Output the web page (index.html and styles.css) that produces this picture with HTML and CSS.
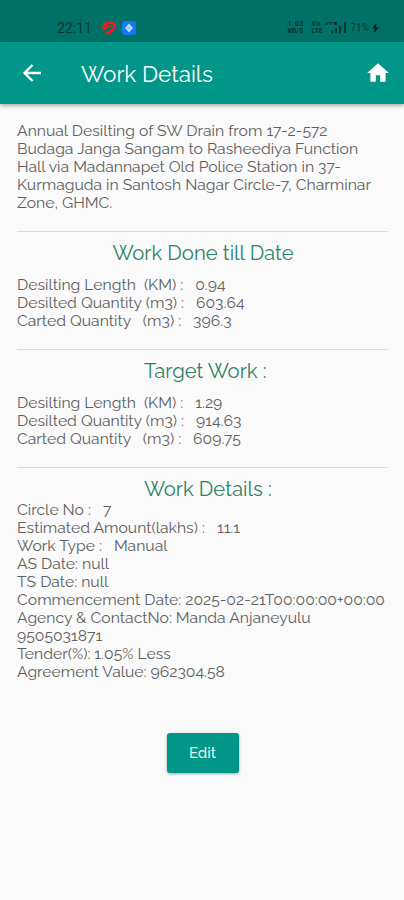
FILE: index.html
```
<!doctype html>
<html lang="en">
<head>
	<meta charset="utf-8">
	<meta name="viewport" content="width=device-width, initial-scale=1.0" />
	<title>Work Details</title>
	<link rel="stylesheet" href="styles.css">
</head>
<body>

	<div class="statusbar">
		<span class="clock">22:11</span>
		<svg class="carrier" width="14" height="14" viewBox="0 0 14 14"><path d="M3 8.500C.5 7 1.500 2 8 1.600c5-.2 6 3.400 3.500 6.200C9.500 10 8 10.500 7 12.500" fill="none" stroke="#ee1c25" stroke-width="2.600"/><path d="M2.500 8.500C4 5 8.500 4 9 6" fill="none" stroke="#ee1c25" stroke-width="2"/><path d="M3 13.500c0-2 2-3 4-4l1 2-1.500 2z" fill="#ee1c25"/></svg>
		<svg class="app" width="14" height="14" viewBox="0 0 14 14"><rect width="14" height="14" rx="3" fill="#1478f0"/><path d="M7 2.500L11 7l-4 4.500L3 7z" fill="#b9dcff"/><path d="M7 5.500L8.500 7 7 8.500 5.500 7z" fill="#8cc2fb"/></svg>
		<div class="system">
			<span class="stack speed"><b>1.03</b><b>KB/S</b></span>
			<span class="stack volte"><b>Vo</b><b>LTE</b></span>
			<svg class="signal" width="22" height="13" viewBox="0 0 22 13"><path d="M0 1h1v3H0zM2 1h2v1H3v2H2zM5 1h3v1H6v2H5zM9 1h3v3H9zM6 9h2v3H6zM10 7h2v5h-2zM14 5h2v7h-2zM19 1h2v11h-2z" fill="#053630"/></svg>
			<span class="battery">71%</span>
			<svg class="bolt" width="7" height="10" viewBox="0 0 7 10"><path d="M4.500 0L0 5.500h2.500L2 10l5-5.700H4.200z" fill="#02211d"/></svg>
		</div>
	</div>

	<div class="appbar">
		<svg class="back" width="24" height="24" viewBox="0 0 24 24"><path d="M21 12H4.500M12.500 4l-8 8 8 8" fill="none" stroke="#fff" stroke-width="2.300"/></svg>
		<h1>Work Details</h1>
		<svg class="home" width="26" height="26" viewBox="0 0 24 24"><path d="M10 20v-6h4v6h5v-8h3L12 3 2 12h3v8z" fill="#fff"/></svg>
	</div>

	<div class="content">
		<p class="summary">Annual Desilting of SW Drain from 17-2-572<br>Budaga Janga Sangam to Rasheediya Function<br>Hall via Madannapet Old Police Station in 37-<br>Kurmaguda in Santosh Nagar Circle-7, Charminar<br>Zone, GHMC.</p>

		<div class="section">
			<h2>Work Done till Date</h2>
			<ul>
				<li>Desilting Length  (KM) :   0.94</li>
				<li>Desilted Quantity (m3) :   603.64</li>
				<li>Carted Quantity   (m3) :   396.3</li>
			</ul>
		</div>

		<div class="section">
			<h2> Target Work :</h2>
			<ul>
				<li>Desilting Length  (KM) :   1.29</li>
				<li>Desilted Quantity (m3) :   914.63</li>
				<li>Carted Quantity   (m3) :   609.75</li>
			</ul>
		</div>

		<div class="section details">
			<h2>  Work Details :</h2>
			<ul>
				<li>Circle No :   7</li>
				<li>Estimated Amount(lakhs) :   11.1</li>
				<li>Work Type :   Manual</li>
				<li>AS Date: null</li>
				<li>TS Date: null</li>
				<li>Commencement Date: 2025-02-21T00:00:00+00:00</li>
				<li>Agency &amp; ContactNo: Manda Anjaneyulu<br>9505031871</li>
				<li>Tender(%): 1.05% Less</li>
				<li>Agreement Value: 962304.58</li>
			</ul>
		</div>

		<button class="edit">Edit</button>
	</div>

</body>
</html>
```
FILE: styles.css
```
* {margin:0; padding:0; box-sizing:border-box;}
body {height:900px; overflow:hidden; background:#fafafa; color:#606060; font:400 15.73px/18px Raleway,Lato,sans-serif;}
svg {display:block; flex:none;}

.statusbar {display:flex; align-items:center; height:42px; padding:13px 25px 0 57px; background:#007166; color:#053630;}
.clock {width:45px; font:14px/16px Roboto,sans-serif;}
.app {margin-left:6px;}
.system {display:flex; align-items:center; margin-left:auto;}
.stack {display:flex; flex-direction:column;}
.stack b {font:bold 7px/7px Roboto,sans-serif;}
.stack b:first-child {letter-spacing:0.6px;}
.speed {width:24px;}
.volte {width:14px;}
.battery {margin:0 3px; font:10px/12px Roboto,sans-serif;}

.appbar {display:flex; align-items:center; height:62px; padding:0 13px 0 20px; background:#009688; color:#fff; box-shadow:0 2px 4px rgba(0,0,0,0.3);}
.appbar h1 {margin-left:37px; padding-top:2px; font-weight:400; font-size:22.5px; line-height:28px;}
.home {margin-left:auto;}

.content {padding:18px 16px 0 17px;}
.summary {padding-bottom:19px; white-space:nowrap;}
.section {height:118px; padding-top:9px; border-top:1px solid #ddd;}
.section h2 {margin-bottom:11px; padding-left:1px; color:#2f8265; font-weight:400; font-size:20.3px; line-height:24px; text-align:center; white-space:pre;}
.section ul {list-style:none;}
.section li {white-space:pre;}
.details {height:auto;}
.details h2 {margin-bottom:0;}
.edit {display:block; width:72px; height:40px; margin:52px auto 0; border:0; border-radius:3px; background:#009688; color:#e6f5f3; font:500 15px Raleway,Lato,sans-serif; box-shadow:0 1px 3px rgba(0,0,0,0.35);}
```
